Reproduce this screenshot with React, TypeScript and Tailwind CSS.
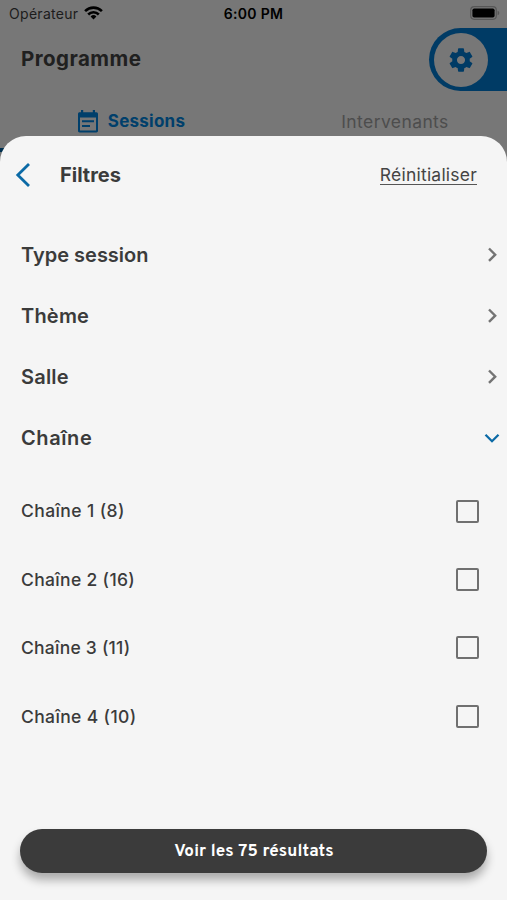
import { useState } from 'react'

const sections = [
  { label: 'Type session', tracking: 'tracking-normal' },
  { label: 'Thème', tracking: 'tracking-[0.2px]' },
  { label: 'Salle', tracking: 'tracking-[0.2px]' },
  { label: 'Chaîne', tracking: 'tracking-[0.6px]' },
]

const channels = [
  { name: 'Chaîne 1', count: 8, tracking: 'tracking-[0.4px]' },
  { name: 'Chaîne 2', count: 16, tracking: 'tracking-[0.33px]' },
  { name: 'Chaîne 3', count: 11, tracking: 'tracking-[0.23px]' },
  { name: 'Chaîne 4', count: 10, tracking: 'tracking-[0.36px]' },
]

function StatusBar() {
  return (
    <div className="grid h-7 grid-cols-3 items-center pr-[7px] pl-[9px] text-black">
      <div className="flex items-center gap-[6px]">
        <span className="text-[14px] leading-none tracking-[0.3px] text-[#1c1c1c]">Opérateur</span>
        <svg className="mb-[2px]" width="19" height="14" viewBox="0 0 19 14" fill="none" stroke="currentColor" strokeWidth="2.6">
          <path d="M1.1 5.1a12 12 0 0 1 16.8 0" />
          <path d="M4.2 8.5a7.5 7.5 0 0 1 10.6 0" />
          <path d="M9.5 13.4 6.6 10.5a4.2 4.2 0 0 1 5.8 0Z" fill="currentColor" stroke="none" />
        </svg>
      </div>
      <span className="pr-[2px] text-center text-[14px] leading-none font-semibold tracking-[0.3px] whitespace-nowrap">6:00 PM</span>
      <svg className="mb-[2px] justify-self-end" width="30" height="14" viewBox="0 0 30 14">
        <rect x="0.7" y="0.7" width="25.6" height="12.6" rx="3.5" fill="none" stroke="#575757" strokeWidth="1.2" />
        <rect x="2.4" y="2.4" width="22.2" height="9.2" rx="1.8" fill="#000" />
        <path d="M27.6 4.7a2.4 2.4 0 0 1 0 4.6Z" fill="#575757" />
      </svg>
    </div>
  )
}

function Chevron({ open }: { open: boolean }) {
  return open ? (
    <svg width="16" height="16" viewBox="0 0 16 16" fill="none" stroke="#0b6aa6" strokeWidth="2.3">
      <path d="M1.5 4.8 8 11.2l6.5-6.4" />
    </svg>
  ) : (
    <svg width="16" height="16" viewBox="0 0 16 16" fill="none" stroke="#747474" strokeWidth="2.4">
      <path d="M5 1.5 11.2 7.7 5 13.9" />
    </svg>
  )
}

export default function App() {
  const [openSection, setOpenSection] = useState('Chaîne')
  const [checked, setChecked] = useState<string[]>([])

  const toggle = (name: string) => {
    setChecked(checked.includes(name) ? checked.filter((c) => c !== name) : [...checked, name])
  }

  return (
    <div className="relative flex h-[900px] w-full flex-col overflow-hidden bg-[#777777] font-['Inter',sans-serif] text-[#3b3b3b]">
      <StatusBar />

      <header className="flex h-[63px] items-center justify-between pl-[21px]">
        <h1 className="text-[20.5px] leading-none font-bold tracking-[0.45px] text-[#202020]">Programme</h1>
        <button className="flex h-[63px] w-[78px] items-center rounded-l-full bg-[#003b65] pl-[5px]" aria-label="Paramètres">
          <span className="flex size-[54px] items-center justify-center rounded-full bg-[#777777] pr-px">
            <svg width="28" height="28" viewBox="0 0 24 24" fill="#003b65">
              <path d="M19.43 12.98c.04-.32.07-.64.07-.98s-.03-.66-.07-.98l2.11-1.65c.19-.15.24-.42.12-.64l-2-3.46c-.12-.22-.39-.3-.61-.22l-2.49 1c-.52-.4-1.08-.73-1.69-.98l-.38-2.65A.488.488 0 0 0 14 2h-4c-.25 0-.46.18-.49.42l-.38 2.65c-.61.25-1.17.59-1.69.98l-2.49-1c-.23-.09-.49 0-.61.22l-2 3.46c-.13.22-.07.49.12.64l2.11 1.65c-.04.32-.07.65-.07.98s.03.66.07.98l-2.11 1.65c-.19.15-.24.42-.12.64l2 3.46c.12.22.39.3.61.22l2.49-1c.52.4 1.08.73 1.69.98l.38 2.65c.03.24.24.42.49.42h4c.25 0 .46-.18.49-.42l.38-2.65c.61-.25 1.17-.59 1.69-.98l2.49 1c.23.09.49 0 .61-.22l2-3.46c.12-.22.07-.49-.12-.64l-2.11-1.65zM12 15.5c-1.93 0-3.5-1.57-3.5-3.5s1.57-3.5 3.5-3.5 3.5 1.57 3.5 3.5-1.57 3.5-3.5 3.5z" />
            </svg>
          </span>
        </button>
      </header>

      <nav className="flex h-[61px]">
        <div className="flex flex-1 items-center justify-center gap-[9px] border-b-4 border-[#00304f] pt-1 pl-[19px] text-[#003f6b]">
          <svg width="22" height="23" viewBox="0 0 22 23">
            <path
              fill="currentColor"
              fillRule="evenodd"
              d="M4 0h2.200v2.200h9.600V0H18v2.200h1.400c1 0 1.600.8 1.600 1.700v16.900c0 1-.7 1.700-1.600 1.700H2.600c-1 0-1.600-.8-1.600-1.700V3.900c0-1 .7-1.700 1.600-1.700H4ZM3 7.400v13.100h16V7.400ZM5 10.200h12v2H5Zm0 4.900h8v2H5Z"
            />
          </svg>
          <span className="text-[17px] leading-none font-bold tracking-[0.25px]">Sessions</span>
        </div>
        <div className="flex flex-1 items-center justify-center pt-px pl-10">
          <span className="text-[17.5px] leading-none tracking-[0.4px] text-[#4d4d4d]">Intervenants</span>
        </div>
      </nav>

      <section className="absolute inset-x-0 top-[136px] bottom-0 flex flex-col rounded-t-[26px] bg-[#f5f5f5]">
        <div className="flex h-[78px] items-center pr-[30px] pl-[15px]">
          <button aria-label="Retour">
            <svg width="16" height="26" viewBox="0 0 16 26" fill="none" stroke="#0b6aa6" strokeWidth="2.8">
              <path d="M14 2 2.8 13 14 24" />
            </svg>
          </button>
          <h2 className="ml-[29px] text-[20px] leading-none font-bold">Filtres</h2>
          <button className="ml-auto border-b border-[#555555] text-[17.5px] leading-[18px] tracking-[0.22px] text-[#444444]">
            Réinitialiser
          </button>
        </div>

        <div className="mt-[10px]">
          {sections.map((s) => (
            <button
              key={s.label}
              onClick={() => setOpenSection(s.label)}
              className="flex h-[61px] w-full items-center justify-between pr-[7px] pl-[21px]"
            >
              <span className={`text-[20px] leading-none font-semibold ${s.tracking}`}>{s.label}</span>
              <Chevron open={openSection === s.label} />
            </button>
          ))}
        </div>

        {openSection === 'Chaîne' && (
          <ul className="mt-[9px]">
            {channels.map((c) => (
              <li key={c.name}>
                <label className="flex h-[68.4px] items-center justify-between pr-7 pl-[21px]">
                  <span className={`text-[17.5px] leading-none font-medium ${c.tracking}`}>
                    {c.name} ({c.count})
                  </span>
                  <input
                    type="checkbox"
                    checked={checked.includes(c.name)}
                    onChange={() => toggle(c.name)}
                    className="size-[23px] appearance-none rounded-[2px] border-2 border-[#707070] checked:bg-[#0b6aa6]"
                  />
                </label>
              </li>
            ))}
          </ul>
        )}

        <button className="mx-5 mt-auto mb-[27px] h-11 rounded-full bg-[#3b3b3b] pt-[2px] pl-px font-['Overpass','Roboto',sans-serif] text-[17px] leading-none font-bold tracking-[0.15px] text-white shadow-[0_7px_10px_rgba(0,0,0,0.3)]">
          Voir les 75 résultats
        </button>
      </section>
    </div>
  )
}
